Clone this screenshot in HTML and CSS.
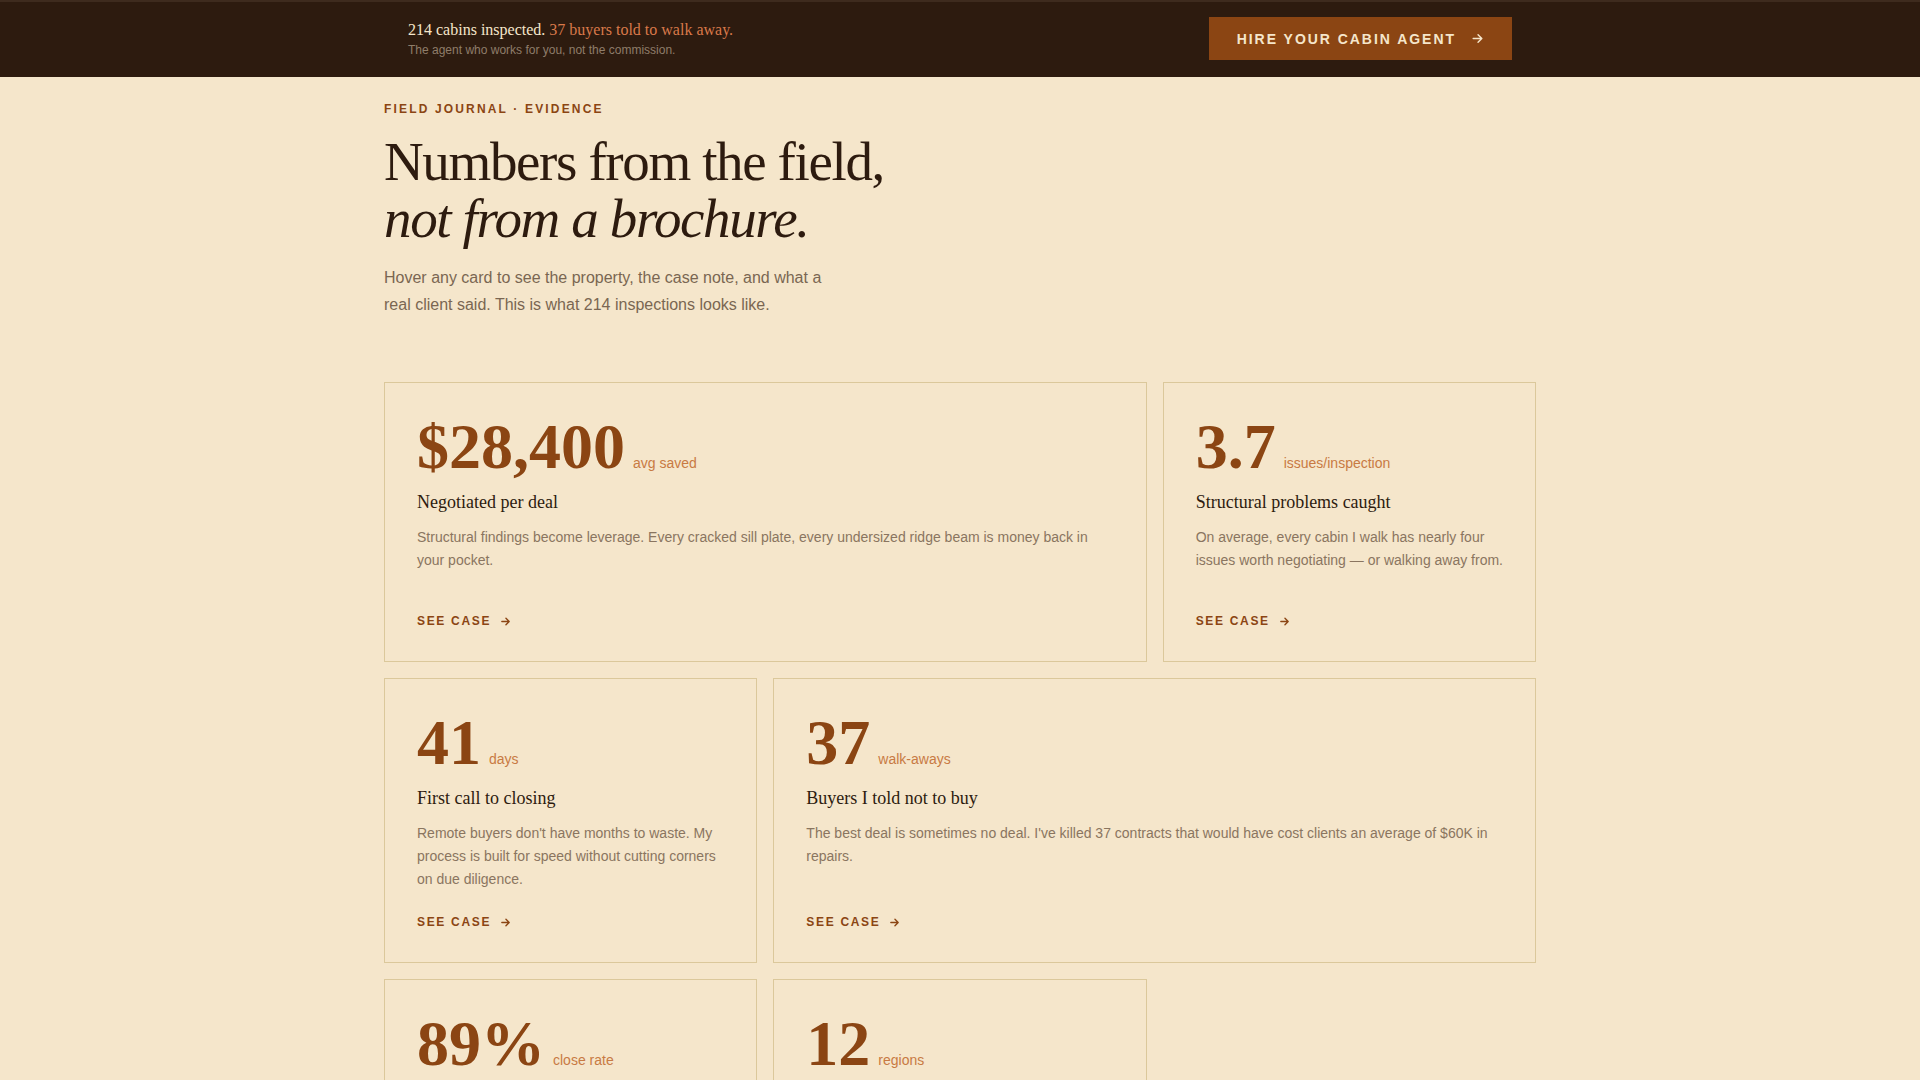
FILE: index.html
```html
<!DOCTYPE html>
<html lang="en">
<head>
    <meta charset="UTF-8">
    <meta name="viewport" content="width=device-width, initial-scale=1.0">
    <title>Field Journal - Evidence</title>
    <link rel="stylesheet" href="styles.css">
</head>
<body>
    <!-- Top strip with the headline numbers and the call to action -->
    <header class="topbar">
        <div class="topbar-inner">
            <div class="topbar-text">
                <p class="topbar-line">214 cabins inspected. <span class="accent">37 buyers told to walk away.</span></p>
                <p class="topbar-sub">The agent who works for you, not the commission.</p>
            </div>
            <a class="hire-btn" href="#">
                HIRE YOUR CABIN AGENT
                <svg viewBox="0 0 24 24" width="13" height="13"><path d="M4 12h15M13 5l7 7-7 7" fill="none" stroke="currentColor" stroke-width="2.6" stroke-linecap="round" stroke-linejoin="round"/></svg>
            </a>
        </div>
    </header>

    <main class="page">
        <p class="eyebrow">FIELD JOURNAL · EVIDENCE</p>
        <h1 class="headline">Numbers from the field,<br><em>not from a brochure.</em></h1>
        <p class="intro">Hover any card to see the property, the case note, and what a real client said. This is what 214 inspections looks like.</p>

        <!-- Stat cards -->
        <section class="stats">
            <article class="card wide">
                <div class="stat"><span class="num">$28,400</span><span class="unit">avg saved</span></div>
                <h3 class="card-title">Negotiated per deal</h3>
                <p class="card-text">Structural findings become leverage. Every cracked sill plate, every undersized ridge beam is money back in your pocket.</p>
                <div class="card-foot"><a class="see-case" href="#">SEE CASE <svg viewBox="0 0 24 24" width="11" height="11"><path d="M4 12h15M13 5l7 7-7 7" fill="none" stroke="currentColor" stroke-width="3" stroke-linecap="round" stroke-linejoin="round"/></svg></a></div>
            </article>

            <article class="card">
                <div class="stat"><span class="num">3.7</span><span class="unit">issues/inspection</span></div>
                <h3 class="card-title">Structural problems caught</h3>
                <p class="card-text">On average, every cabin I walk has nearly four issues worth negotiating — or walking away from.</p>
                <div class="card-foot"><a class="see-case" href="#">SEE CASE <svg viewBox="0 0 24 24" width="11" height="11"><path d="M4 12h15M13 5l7 7-7 7" fill="none" stroke="currentColor" stroke-width="3" stroke-linecap="round" stroke-linejoin="round"/></svg></a></div>
            </article>

            <article class="card">
                <div class="stat"><span class="num">41</span><span class="unit">days</span></div>
                <h3 class="card-title">First call to closing</h3>
                <p class="card-text">Remote buyers don't have months to waste. My process is built for speed without cutting corners on due diligence.</p>
                <div class="card-foot"><a class="see-case" href="#">SEE CASE <svg viewBox="0 0 24 24" width="11" height="11"><path d="M4 12h15M13 5l7 7-7 7" fill="none" stroke="currentColor" stroke-width="3" stroke-linecap="round" stroke-linejoin="round"/></svg></a></div>
            </article>

            <article class="card wide">
                <div class="stat"><span class="num">37</span><span class="unit">walk-aways</span></div>
                <h3 class="card-title">Buyers I told not to buy</h3>
                <p class="card-text">The best deal is sometimes no deal. I've killed 37 contracts that would have cost clients an average of $60K in repairs.</p>
                <div class="card-foot"><a class="see-case" href="#">SEE CASE <svg viewBox="0 0 24 24" width="11" height="11"><path d="M4 12h15M13 5l7 7-7 7" fill="none" stroke="currentColor" stroke-width="3" stroke-linecap="round" stroke-linejoin="round"/></svg></a></div>
            </article>

            <article class="card">
                <div class="stat"><span class="num">89%</span><span class="unit">close rate</span></div>
                <h3 class="card-title">Offers that got accepted</h3>
                <p class="card-text">Sellers take inspection-backed offers seriously. Evidence beats a lowball every time.</p>
                <div class="card-foot"><a class="see-case" href="#">SEE CASE <svg viewBox="0 0 24 24" width="11" height="11"><path d="M4 12h15M13 5l7 7-7 7" fill="none" stroke="currentColor" stroke-width="3" stroke-linecap="round" stroke-linejoin="round"/></svg></a></div>
            </article>

            <article class="card">
                <div class="stat"><span class="num">12</span><span class="unit">regions</span></div>
                <h3 class="card-title">Mountain markets covered</h3>
                <p class="card-text">From lake country to the high ridges, I know the soils, the snow loads and the local builders.</p>
                <div class="card-foot"><a class="see-case" href="#">SEE CASE <svg viewBox="0 0 24 24" width="11" height="11"><path d="M4 12h15M13 5l7 7-7 7" fill="none" stroke="currentColor" stroke-width="3" stroke-linecap="round" stroke-linejoin="round"/></svg></a></div>
            </article>
        </section>
    </main>
</body>
</html>
```

FILE: styles.css
```css
body {
    margin: 0;
    padding: 0;
    background-color: #f5e6cb;
    font-family: 'Liberation Sans', Arial, sans-serif;
    color: #2d1b0f;
}

p, h1, h3 {
    margin: 0;
}

/* Top strip */
.topbar {
    background-color: #2d1b0f;
    border-top: 2px solid #3e2b1e;
}

.topbar-inner {
    max-width: 1200px;
    margin: 0 auto;
    padding: 15px 48px 17px;
    box-sizing: border-box;
    display: flex;
    justify-content: space-between;
    align-items: center;
}

.topbar-line {
    font-family: 'Liberation Serif', 'Times New Roman', serif;
    font-size: 16px;
    line-height: 20px;
    color: #f5e6cb;
}

.topbar-line .accent {
    color: #d9794a;
}

.topbar-sub {
    margin-top: 2px;
    font-size: 12px;
    line-height: 16px;
    color: #8f7d6a;
}

.hire-btn {
    display: flex;
    align-items: center;
    gap: 15px;
    height: 43px;
    padding: 0 28px;
    box-sizing: border-box;
    background-color: #8b4513;
    color: #f5e6cb;
    font-size: 14px;
    font-weight: bold;
    letter-spacing: 0.14em;
    text-decoration: none;
}

/* Main column */
.page {
    max-width: 1200px;
    margin: 0 auto;
    padding: 24px 24px 64px;
    box-sizing: border-box;
}

.eyebrow {
    font-size: 12px;
    line-height: 16px;
    font-weight: bold;
    letter-spacing: 0.18em;
    color: #8b4513;
}

.headline {
    margin-top: 16px;
    font-family: 'Liberation Serif', 'Times New Roman', serif;
    font-weight: normal;
    font-size: 55px;
    line-height: 57px;
    letter-spacing: -0.025em;
    color: #2d1b0f;
}

.headline em {
    font-style: italic;
}

.intro {
    margin-top: 18px;
    max-width: 460px;
    font-size: 16px;
    line-height: 1.67;
    color: #7a6652;
}

/* Stat cards */
.stats {
    margin-top: 64px;
    display: grid;
    grid-template-columns: repeat(3, 1fr);
    gap: 16px;
}

.card {
    display: flex;
    flex-direction: column;
    min-height: 280px;
    box-sizing: border-box;
    padding: 32px;
    border: 1px solid #dbc89b;
    transition: background-color 0.2s;
}

.card:hover {
    background-color: #f2dfbe;
}

.card.wide {
    grid-column: span 2;
}

.stat {
    display: flex;
    align-items: baseline;
    gap: 8px;
}

.num {
    font-family: 'Liberation Serif', 'Times New Roman', serif;
    font-weight: bold;
    font-size: 64px;
    line-height: 64px;
    color: #8b4513;
}

.unit {
    font-size: 14px;
    color: #c87a43;
}

.card-title {
    margin: 12px 0 11px;
    font-family: 'Liberation Serif', 'Times New Roman', serif;
    font-weight: normal;
    font-size: 18px;
    line-height: 1.3;
    color: #2d1b0f;
}

.card-text {
    font-size: 14px;
    line-height: 1.65;
    color: #8a7560;
}

.card-foot {
    margin-top: auto;
    padding-top: 21px;
}

.see-case {
    display: inline-flex;
    align-items: center;
    gap: 9px;
    font-size: 12px;
    line-height: 16px;
    font-weight: bold;
    letter-spacing: 0.14em;
    color: #8b4513;
    text-decoration: none;
}
```
